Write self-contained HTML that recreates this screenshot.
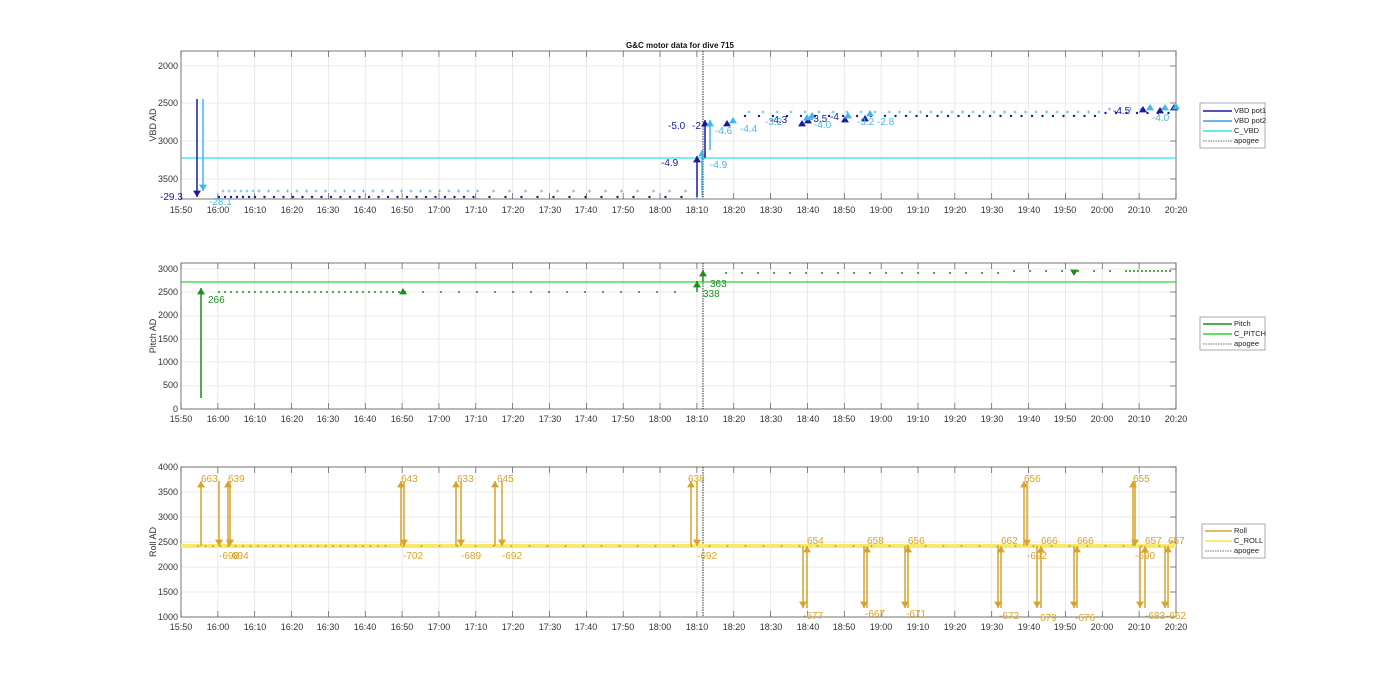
<!DOCTYPE html>
<html><head><meta charset="utf-8"><style>
html,body{margin:0;padding:0;background:#fff;width:1400px;height:693px;overflow:hidden}
svg{display:block;font-family:"Liberation Sans",sans-serif}
.t{font-size:9px;fill:#333}
.yl{font-size:9px;fill:#333}
.lg{font-size:7.5px;fill:#222}
</style></head><body>
<svg id="s" width="1400" height="693" viewBox="0 0 1400 693">
<rect width="1400" height="693" fill="#fff"/>
<g id="grid"></g>
<g id="data"></g>
<text x="680" y="48" text-anchor="middle" font-size="8" font-weight="bold" fill="#111">G&amp;C motor data for dive 715</text>
<g class="yl" text-anchor="end">
<text x="178" y="69">2000</text><text x="178" y="106">2500</text><text x="178" y="144">3000</text><text x="178" y="182">3500</text>
<text x="178" y="272">3000</text><text x="178" y="295">2500</text><text x="178" y="318">2000</text><text x="178" y="342">1500</text><text x="178" y="365">1000</text><text x="178" y="388">500</text><text x="178" y="412">0</text>
<text x="178" y="470">4000</text><text x="178" y="495">3500</text><text x="178" y="520">3000</text><text x="178" y="545">2500</text><text x="178" y="570">2000</text><text x="178" y="595">1500</text><text x="178" y="620">1000</text>
</g>
<g font-size="9" fill="#333">
<text transform="translate(156,125) rotate(-90)" text-anchor="middle">VBD AD</text>
<text transform="translate(156,336) rotate(-90)" text-anchor="middle">Pitch AD</text>
<text transform="translate(156,542) rotate(-90)" text-anchor="middle">Roll AD</text>
</g>
<g class="t" text-anchor="middle">
<text x="181" y="213">15:50</text><text x="218" y="213">16:00</text><text x="255" y="213">16:10</text><text x="292" y="213">16:20</text><text x="328" y="213">16:30</text><text x="365" y="213">16:40</text><text x="402" y="213">16:50</text><text x="439" y="213">17:00</text><text x="476" y="213">17:10</text><text x="513" y="213">17:20</text><text x="550" y="213">17:30</text><text x="586" y="213">17:40</text><text x="623" y="213">17:50</text><text x="660" y="213">18:00</text><text x="697" y="213">18:10</text><text x="734" y="213">18:20</text><text x="771" y="213">18:30</text><text x="808" y="213">18:40</text><text x="844" y="213">18:50</text><text x="881" y="213">19:00</text><text x="918" y="213">19:10</text><text x="955" y="213">19:20</text><text x="992" y="213">19:30</text><text x="1029" y="213">19:40</text><text x="1065" y="213">19:50</text><text x="1102" y="213">20:00</text><text x="1139" y="213">20:10</text><text x="1176" y="213">20:20</text>
</g>
<g class="t" text-anchor="middle">
<text x="181" y="422">15:50</text><text x="218" y="422">16:00</text><text x="255" y="422">16:10</text><text x="292" y="422">16:20</text><text x="328" y="422">16:30</text><text x="365" y="422">16:40</text><text x="402" y="422">16:50</text><text x="439" y="422">17:00</text><text x="476" y="422">17:10</text><text x="513" y="422">17:20</text><text x="550" y="422">17:30</text><text x="586" y="422">17:40</text><text x="623" y="422">17:50</text><text x="660" y="422">18:00</text><text x="697" y="422">18:10</text><text x="734" y="422">18:20</text><text x="771" y="422">18:30</text><text x="808" y="422">18:40</text><text x="844" y="422">18:50</text><text x="881" y="422">19:00</text><text x="918" y="422">19:10</text><text x="955" y="422">19:20</text><text x="992" y="422">19:30</text><text x="1029" y="422">19:40</text><text x="1065" y="422">19:50</text><text x="1102" y="422">20:00</text><text x="1139" y="422">20:10</text><text x="1176" y="422">20:20</text>
</g>
<g class="t" text-anchor="middle">
<text x="181" y="630">15:50</text><text x="218" y="630">16:00</text><text x="255" y="630">16:10</text><text x="292" y="630">16:20</text><text x="328" y="630">16:30</text><text x="365" y="630">16:40</text><text x="402" y="630">16:50</text><text x="439" y="630">17:00</text><text x="476" y="630">17:10</text><text x="513" y="630">17:20</text><text x="550" y="630">17:30</text><text x="586" y="630">17:40</text><text x="623" y="630">17:50</text><text x="660" y="630">18:00</text><text x="697" y="630">18:10</text><text x="734" y="630">18:20</text><text x="771" y="630">18:30</text><text x="808" y="630">18:40</text><text x="844" y="630">18:50</text><text x="881" y="630">19:00</text><text x="918" y="630">19:10</text><text x="955" y="630">19:20</text><text x="992" y="630">19:30</text><text x="1029" y="630">19:40</text><text x="1065" y="630">19:50</text><text x="1102" y="630">20:00</text><text x="1139" y="630">20:10</text><text x="1176" y="630">20:20</text>
</g>
<g font-size="10">
<text x="160" y="200" fill="#1a1aa0">-29.3</text>
<text x="209" y="205" fill="#4fb8e0">-28.1</text>
<text x="668" y="129" fill="#1a1aa0">-5.0</text>
<text x="692" y="129" fill="#1a1aa0">-2</text>
<text x="661" y="166" fill="#1a1aa0">-4.9</text>
<text x="710" y="168" fill="#4fb8e0">-4.9</text>
<text x="715" y="134" fill="#4fb8e0">-4.6</text>
<text x="740" y="132" fill="#4fb8e0">-4.4</text>
<text x="765" y="125" fill="#4fb8e0">-3.2</text>
<text x="770" y="123" fill="#1a1aa0">-4.3</text>
<text x="810" y="122" fill="#1a1aa0">-3.5</text>
<text x="814" y="128" fill="#4fb8e0">-4.0</text>
<text x="830" y="120" fill="#1a1aa0">-4</text>
<text x="857" y="125" fill="#4fb8e0">-3.2</text>
<text x="877" y="125" fill="#4fb8e0">-2.8</text>
<text x="1113" y="114" fill="#1a1aa0">-4.5</text>
<text x="1152" y="121" fill="#4fb8e0">-4.0</text>
</g>
<g font-size="10" fill="#1e8c1e">
<text x="208" y="303">266</text><text x="710" y="287">363</text><text x="703" y="297">338</text>
</g>
<g font-size="10" fill="#d9a32a">
<text x="201" y="482">663</text><text x="219" y="559">-698</text><text x="228" y="482">639</text><text x="232" y="559">694</text>
<text x="401" y="482">643</text><text x="403" y="559">-702</text><text x="457" y="482">633</text><text x="461" y="559">-689</text>
<text x="497" y="482">645</text><text x="502" y="559">-692</text><text x="688" y="482">638</text><text x="697" y="559">-692</text>
<text x="807" y="544">654</text><text x="803" y="619">-677</text><text x="867" y="544">658</text><text x="865" y="617">-667</text>
<text x="908" y="544">656</text><text x="906" y="617">-671</text><text x="1001" y="544">662</text><text x="999" y="619">-672</text>
<text x="1024" y="482">656</text><text x="1027" y="559">-692</text><text x="1041" y="544">666</text><text x="1040" y="621">679</text>
<text x="1077" y="544">666</text><text x="1075" y="621">-676</text><text x="1133" y="482">655</text><text x="1135" y="559">-690</text>
<text x="1145" y="544">657</text><text x="1145" y="619">-683</text><text x="1168" y="544">657</text><text x="1166" y="619">-662</text>
</g>
<g>
<rect x="1200" y="103" width="65" height="45" fill="#fff" stroke="#888" stroke-width="0.7"/>
<line x1="1203" y1="111" x2="1232" y2="111" stroke="#1a1aa0" stroke-width="1.5"/><text class="lg" x="1234" y="113">VBD pot1</text>
<line x1="1203" y1="121" x2="1232" y2="121" stroke="#3aa0e0" stroke-width="1.5"/><text class="lg" x="1234" y="123">VBD pot2</text>
<line x1="1203" y1="131" x2="1232" y2="131" stroke="#33e0e8" stroke-width="1.5"/><text class="lg" x="1234" y="133">C_VBD</text>
<line x1="1203" y1="141" x2="1232" y2="141" stroke="#444" stroke-width="0.8" stroke-dasharray="1.5 1"/><text class="lg" x="1234" y="143">apogee</text>
<rect x="1200" y="317" width="65" height="33" fill="#fff" stroke="#888" stroke-width="0.7"/>
<line x1="1203" y1="324" x2="1232" y2="324" stroke="#1e8c1e" stroke-width="1.5"/><text class="lg" x="1234" y="326">Pitch</text>
<line x1="1203" y1="334" x2="1232" y2="334" stroke="#33d433" stroke-width="1.5"/><text class="lg" x="1234" y="336">C_PITCH</text>
<line x1="1203" y1="344" x2="1232" y2="344" stroke="#444" stroke-width="0.8" stroke-dasharray="1.5 1"/><text class="lg" x="1234" y="346">apogee</text>
<rect x="1202" y="524" width="63" height="34" fill="#fff" stroke="#888" stroke-width="0.7"/>
<line x1="1205" y1="531" x2="1232" y2="531" stroke="#d9a32a" stroke-width="1.5"/><text class="lg" x="1234" y="533">Roll</text>
<line x1="1205" y1="541" x2="1232" y2="541" stroke="#f5e84a" stroke-width="1.5"/><text class="lg" x="1234" y="543">C_ROLL</text>
<line x1="1205" y1="551" x2="1232" y2="551" stroke="#444" stroke-width="0.8" stroke-dasharray="1.5 1"/><text class="lg" x="1234" y="553">apogee</text>
</g>
</svg>
<script>
var NS="http://www.w3.org/2000/svg";
var G=document.getElementById('grid'),D=document.getElementById('data');
function el(p,t,a){var e=document.createElementNS(NS,t);for(var k in a)e.setAttribute(k,a[k]);p.appendChild(e);return e;}
function X(i){return 181+i*36.85;}
var axes=[[51,199,[66,103,141,179]],[263,409,[269,292,316,339,362,386,409]],[467,617,[467,492,517,542,567,592,617]]];
axes.forEach(function(a){
 for(var i=1;i<27;i++){el(G,'line',{x1:X(i),x2:X(i),y1:a[0],y2:a[1],stroke:'#e4e4e4','stroke-width':0.8});}
 a[2].forEach(function(y){el(G,'line',{x1:181,x2:1176,y1:y,y2:y,stroke:'#e4e4e4','stroke-width':0.8});
   el(G,'line',{x1:1170,x2:1176,y1:y,y2:y,stroke:'#555','stroke-width':0.7});});
 for(var i=0;i<=27;i++){el(G,'line',{x1:X(i),x2:X(i),y1:a[0],y2:a[0]+6,stroke:'#555','stroke-width':0.7});el(G,'line',{x1:X(i),x2:X(i),y1:a[1],y2:a[1]-6,stroke:'#555','stroke-width':0.7});}
 el(G,'rect',{x:181,y:a[0],width:995,height:a[1]-a[0],fill:'none',stroke:'#555','stroke-width':0.8});
 el(D,'line',{x1:703,x2:703,y1:a[0],y2:a[1],stroke:'#333','stroke-width':1,'stroke-dasharray':'1.5 1'});
});
function dot(x,y,c,r){el(D,'circle',{cx:x,cy:y,r:r||1.2,fill:c});}
function plus(x,y,c){el(D,'path',{d:'M'+(x-1.5)+' '+y+'h3M'+x+' '+(y-1.5)+'v3',stroke:c,'stroke-width':0.8});}
function tri(x,y,up,c,s){s=s||4;el(D,'path',{d:up?('M'+(x-s)+' '+(y+s*1.6)+'L'+x+' '+y+'L'+(x+s)+' '+(y+s*1.6)+'Z'):('M'+(x-s)+' '+(y-s*1.6)+'L'+x+' '+y+'L'+(x+s)+' '+(y-s*1.6)+'Z'),fill:c});}
function arr(x,y1,y2,c,w){el(D,'line',{x1:x,x2:x,y1:y1,y2:y2,stroke:c,'stroke-width':w||1.5});tri(x,y2,y2<y1,c);}
var DB='#1a1aa0',LB='#3fb8ec',CY='#33e0e8',GR='#1e8c1e',GO='#d9a32a';
el(D,'line',{x1:181,x2:1176,y1:158,y2:158,stroke:CY,'stroke-width':1.2});
for(var x=219;x<690;x+=(x<250?6:(x<470?9.5:16))){dot(x,197,DB);plus(x+4,191,LB);}
for(var x=745;x<1176;x+=(x<880?14:10.5)){dot(x,116+(x>1100?-3:0),DB);plus(x+4,112+(x>1100?-3:0),LB);}
arr(197,99,197,DB);arr(203,99,191,LB);
arr(697,197,156,DB);arr(702,190,150,LB);el(D,'line',{x1:702,x2:702,y1:150,y2:197,stroke:LB,'stroke-width':1});
arr(705,158,120,DB);arr(710,150,120,LB);
[[727,120],[802,120],[808,117],[845,116],[865,115],[1143,106],[1160,107],[1174,104]].forEach(function(p){tri(p[0],p[1],1,DB);});
[[733,117],[807,114],[812,112],[848,112],[870,110],[1150,104],[1165,104],[1176,103]].forEach(function(p){tri(p[0],p[1],1,LB);});
el(D,'line',{x1:181,x2:1176,y1:282,y2:282,stroke:'#33d433','stroke-width':1.2});
arr(201,398,288,GR);tri(403,288,1,GR);
for(var x=219;x<690;x+=(x<400?6:18))dot(x,292,GR,1);
arr(697,292,281,GR);arr(703,282,270,GR);
for(var x=726;x<1172;x+=(x<1120?16:4))dot(x,273-(x>1000?2:0),GR,1);
tri(1074,276,0,GR);
el(D,'rect',{x:181,y:544,width:995,height:4,fill:'#f7ea6a'});
for(var x=198;x<1176;x+=(x<380?7.5:18))dot(x,546,'#c9a23a',1);
[[201,219],[228,230],[401,404],[456,461],[495,502],[691,697],[1024,1027],[1133,1135]].forEach(function(p){arr(p[0],546,481,GO,1.5);arr(p[1],481,546,GO,1.5);});
[[803,807],[864,867],[905,908],[998,1001],[1037,1041],[1074,1077],[1140,1145],[1165,1168]].forEach(function(p){arr(p[0],546,608,GO,1.5);arr(p[1],608,546,GO,1.5);});
</script>
</body></html>
